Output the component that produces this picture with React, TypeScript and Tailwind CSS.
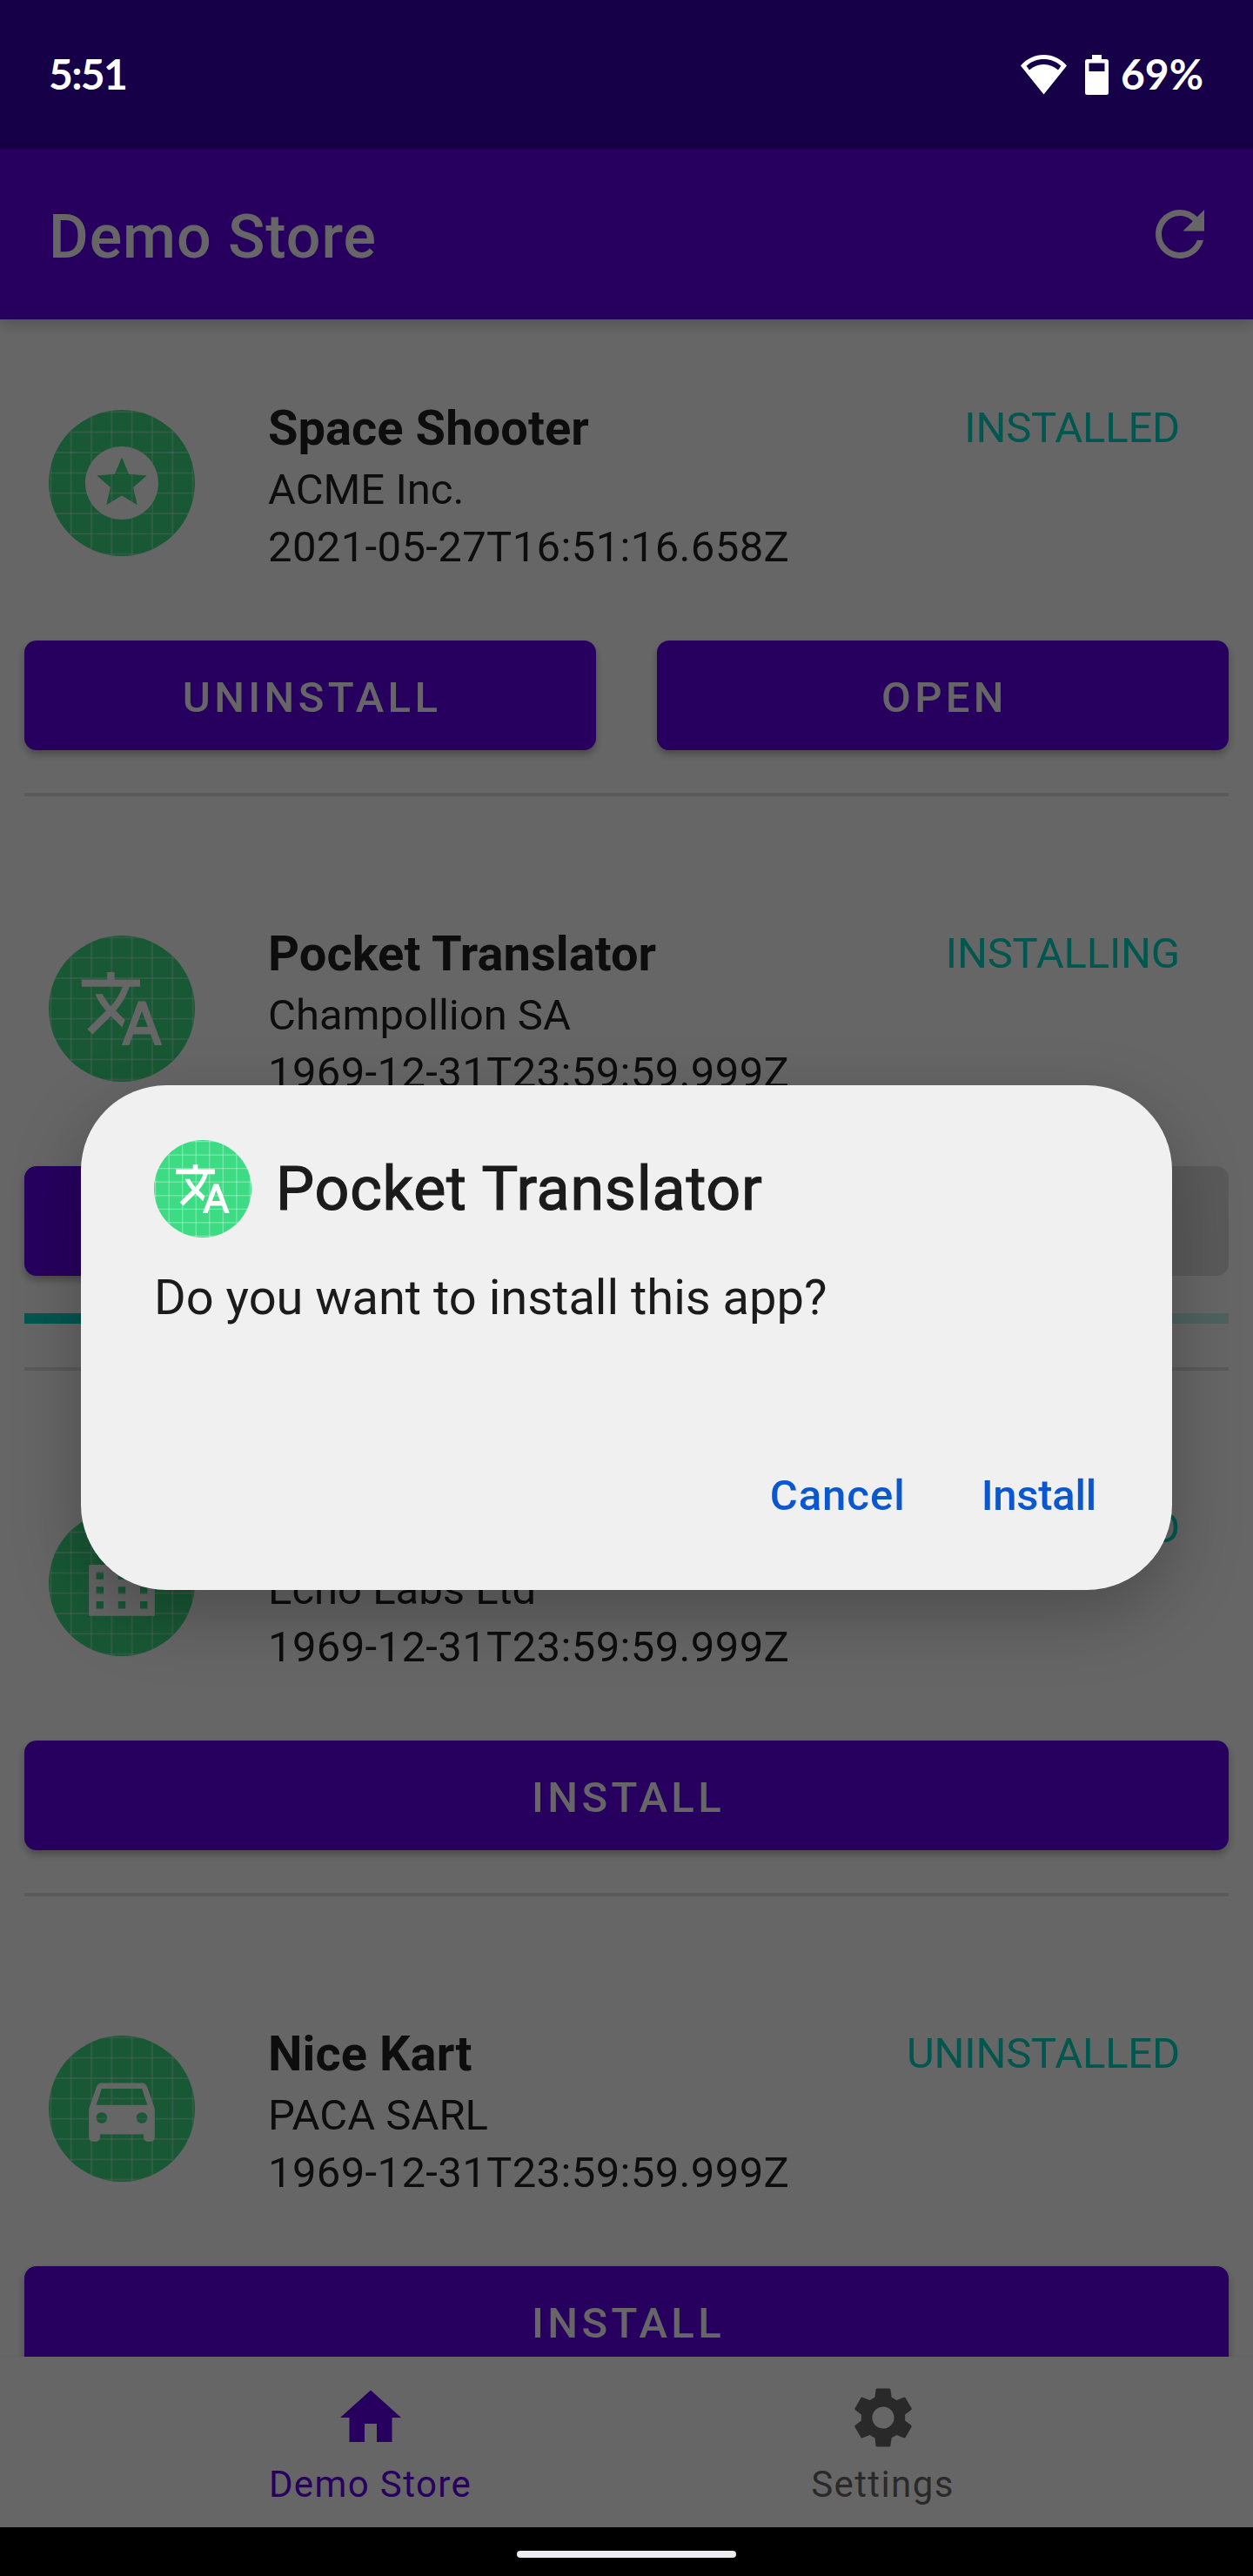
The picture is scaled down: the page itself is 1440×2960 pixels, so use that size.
import type { ReactNode } from "react";
import {
  MdDirectionsCar,
  MdHome,
  MdLocationCity,
  MdRefresh,
  MdSettings,
  MdStars,
  MdTranslate,
} from "react-icons/md";
import type { IconType } from "react-icons";

const GRID = [19, 29, 39, 49, 59, 69, 79, 89];

function AppIcon({ icon: Icon, className }: { icon: IconType; className: string }) {
  return (
    <svg viewBox="18 18 72 72" className={`shrink-0 rounded-full bg-[#3ddc84] ${className}`}>
      <g stroke="#fff" strokeOpacity="0.33" strokeWidth="0.8">
        {GRID.map((p) => (
          <path key={p} d={`M${p} 0V108M0 ${p}H108`} />
        ))}
      </g>
      <Icon x="32.4" y="32.4" size="43.2" color="#fff" />
    </svg>
  );
}

function Button({ children, disabled }: { children?: ReactNode; disabled?: boolean }) {
  return (
    <button
      className={`flex h-[126px] flex-1 items-center justify-center rounded-[14px] pl-1 pt-[5px] text-[49px] font-medium tracking-[0.0893em] ${
        disabled
          ? "bg-[#e0e0e0] text-black/40"
          : "bg-[#6200ee] text-white shadow-[0_5px_9px_rgba(0,0,0,0.28)]"
      }`}
    >
      {children}
    </button>
  );
}

type ItemProps = {
  icon: IconType;
  name?: string;
  company: string;
  date: string;
  status: string;
  progress?: boolean;
  children: ReactNode;
};

function AppItem({ icon, name, company, date, status, progress, children }: ItemProps) {
  return (
    <li className="flex shrink-0 flex-col px-7 pt-40">
      <div className="flex h-[168px] items-start pl-7 pr-14">
        <AppIcon icon={icon} className="size-[168px]" />
        <div className="-mt-3 ml-[84px] flex-1 whitespace-nowrap text-[49px] leading-[66px] text-black/87">
          <h2 className="mb-[5px] h-[66px] text-[56px] font-bold tracking-[0.001em]">{name}</h2>
          <p>{company}</p>
          <p className="tracking-[0.0075em]">{date}</p>
        </div>
        <span className="-mt-3 text-[49px] leading-[66px] tracking-[-0.004em] text-[#03dac5]">
          {status}
        </span>
      </div>
      <div className="mt-[97px] flex gap-[70px]">{children}</div>
      {progress && (
        <div className="mt-[43px] flex h-3 bg-[#03dac5]/24">
          <div className="w-1/3 bg-[#03dac5]" />
        </div>
      )}
      <div className={`h-1 bg-[#e0e0e0] ${progress ? "mt-[50px]" : "mt-[49px]"}`} />
    </li>
  );
}

function NavItem({ icon: Icon, label, className }: { icon: IconType; label: string; className: string }) {
  return (
    <a className={`flex w-[589px] flex-col items-center pt-[28px] ${className}`}>
      <Icon className="size-[84px]" />
      <span className="mt-[10px] text-[42px] leading-[50px] tracking-[0.033em]">{label}</span>
    </a>
  );
}

export default function App() {
  return (
    <div className="relative flex h-[2960px] w-[1440px] flex-col overflow-hidden bg-white font-[Roboto,sans-serif]">
      <div className="flex h-[171px] shrink-0 items-center justify-between bg-[#3700b3] pl-14 pr-[57px] font-[Lato,sans-serif] text-[48px] font-bold text-white">
        <span className="relative z-20 mb-[2px] tracking-[-0.035em]">5:51</span>
        <div className="relative z-20 flex items-center">
          <svg viewBox="0 0 53 46" className="h-[46px] w-[53px]" fill="currentColor">
            <path
              fillRule="evenodd"
              d="M26.5 0C16.300 0 7 4.200 0 12.500L26.500 45.500L53 12.500C46 4.200 36.700 0 26.500 0ZM26.500 5C34 5 40.700 7.600 46.400 12.700L43 17.500C38.500 13.200 32.900 11 26.500 11C20.100 11 14.500 13.200 10 17.500L6.600 12.700C12.300 7.600 19 5 26.500 5Z"
            />
          </svg>
          <svg viewBox="0 0 27 46" className="ml-[21px] h-[46px] w-[27px]" fill="currentColor">
            <path
              fillRule="evenodd"
              d="M8 0H19V5H24.500Q27 5 27 7.500V43.500Q27 46 24.500 46H2.500Q0 46 0 43.500V7.500Q0 5 2.500 5H8ZM4.500 9.500V19H22.500V9.500Z"
            />
          </svg>
          <span className="mb-[2px] ml-[14px]">69%</span>
        </div>
      </div>

      <header className="relative z-[1] flex h-[196px] shrink-0 items-center justify-between bg-[#6200ee] pl-14 pr-[42px] text-white shadow-[0_6px_14px_rgba(0,0,0,0.18)]">
        <h1 className="pt-[6px] text-[70px] font-medium leading-[82px] tracking-[0.0135em]">Demo Store</h1>
        <MdRefresh className="size-[84px]" />
      </header>

      <ul className="-mt-14 flex h-[2397px] shrink-0 flex-col overflow-hidden">
        <AppItem
          icon={MdStars}
          name="Space Shooter"
          company="ACME Inc."
          date="2021-05-27T16:51:16.658Z"
          status="INSTALLED"
        >
          <Button>UNINSTALL</Button>
          <Button>OPEN</Button>
        </AppItem>
        <AppItem
          icon={MdTranslate}
          name="Pocket Translator"
          company="Champollion SA"
          date="1969-12-31T23:59:59.999Z"
          status="INSTALLING"
          progress
        >
          <Button />
          <Button disabled />
        </AppItem>
        <AppItem
          icon={MdLocationCity}
          company="Echo Labs Ltd"
          date="1969-12-31T23:59:59.999Z"
          status="UNINSTALLED"
        >
          <Button>INSTALL</Button>
        </AppItem>
        <AppItem
          icon={MdDirectionsCar}
          name="Nice Kart"
          company="PACA SARL"
          date="1969-12-31T23:59:59.999Z"
          status="UNINSTALLED"
        >
          <Button>INSTALL</Button>
        </AppItem>
      </ul>

      <nav className="flex h-[196px] shrink-0 justify-center bg-white shadow-[0_0_4px_rgba(0,0,0,0.06)]">
        <NavItem icon={MdHome} label="Demo Store" className="text-[#6200ee]" />
        <NavItem icon={MdSettings} label="Settings" className="text-black/60" />
      </nav>

      <div className="flex h-14 shrink-0 justify-center bg-black pt-[27px]">
        <div className="relative z-20 h-2 w-[252px] rounded-full bg-[#ededef]" />
      </div>

      <div className="absolute inset-0 z-10 bg-black/60" />

      <div
        role="dialog"
        className="absolute left-[93px] top-[1247px] z-20 flex h-[580px] w-[1254px] flex-col rounded-[98px] bg-[#f0f0f0] px-[84px] pt-[63px] text-[#1b1b1b] shadow-[0_28px_80px_rgba(0,0,0,0.25)]"
      >
        <div className="flex h-28 items-center gap-7">
          <AppIcon icon={MdTranslate} className="size-28" />
          <h2 className="whitespace-nowrap text-[70px] leading-[82px] tracking-[0.011em] [-webkit-text-stroke:1.2px_currentColor]">
            Pocket Translator
          </h2>
        </div>
        <p className="mt-[36px] text-[56px] leading-[66px]">Do you want to install this app?</p>
        <div className="mt-[162px] flex justify-end gap-[87px] pr-[3px] text-[49px] font-medium leading-[66px] text-[#0b57d0]">
          <button className="tracking-[0.02em]">Cancel</button>
          <button className="tracking-[-0.005em]">Install</button>
        </div>
      </div>
    </div>
  );
}
